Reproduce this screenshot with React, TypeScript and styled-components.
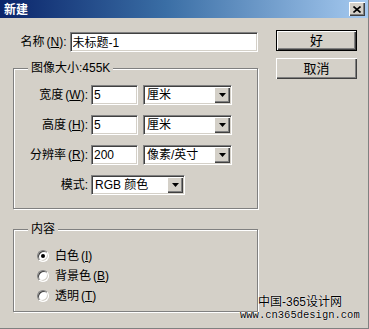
import styled, { createGlobalStyle } from "styled-components";

const GlobalStyle = createGlobalStyle`
  html, body {
    margin: 0;
    padding: 0;
    background: #d4d0c8;
  }
  * {
    box-sizing: border-box;
  }
`;

const Window = styled.div`
  position: relative;
  width: 369px;
  height: 329px;
  background: #d4d0c8;
  border-right: 1px solid #808080;
  border-bottom: 1px solid #808080;
  font-family: "Liberation Sans", "Noto Sans CJK SC", sans-serif;
  font-size: 12px;
  line-height: 14px;
  color: #000;
  overflow: hidden;
`;

const TitleBar = styled.div`
  height: 18px;
  display: flex;
  align-items: center;
  justify-content: space-between;
  padding: 0 3px 0 4px;
  background: linear-gradient(to right, #0a246a 0%, #3a6ea5 45%, #a6caf0 100%);
`;

const TitleText = styled.span`
  color: #fff;
  font-weight: bold;
  font-size: 12px;
  font-family: "Noto Sans CJK SC", sans-serif;
`;

const CloseButton = styled.div`
  width: 16px;
  height: 14px;
  display: flex;
  align-items: center;
  justify-content: center;
  background: #d4d0c8;
  box-shadow: inset 1px 1px 0 #fff, inset -1px -1px 0 #404040,
    inset -2px -2px 0 #808080;
`;

const Body = styled.div`
  display: flex;
  padding: 12px 0 0 13px;
`;

const LeftColumn = styled.div`
  width: 245px;
  display: flex;
  flex-direction: column;
`;

const RightColumn = styled.div`
  margin-left: 18px;
  display: flex;
  flex-direction: column;
  gap: 7px;
`;

const NameRow = styled.div`
  display: flex;
  align-items: center;
  height: 21px;
  margin-top: 1px;
  padding-left: 4px;
`;

const Label = styled.span<{ $width?: number }>`
  display: inline-block;
  width: ${(p) => (p.$width ? `${p.$width}px` : "auto")};
  text-align: right;
  margin-right: 3px;
  white-space: nowrap;
`;

const Key = styled.span`
  margin-left: 2px;
`;

const TextField = styled.input<{ $width: number }>`
  width: ${(p) => p.$width}px;
  height: 20px;
  margin: 0;
  padding: 0 2px;
  font: inherit;
  color: #000;
  background: #fff;
  outline: none;
  border: 1px solid;
  border-color: #808080 #fff #fff #808080;
  box-shadow: inset 1px 1px 0 #404040, inset -1px -1px 0 #d4d0c8;
`;

const GroupBox = styled.div<{ $top: number; $height: number }>`
  position: relative;
  margin-top: ${(p) => p.$top}px;
  width: 245px;
  height: ${(p) => p.$height}px;
  border: 1px solid #808080;
  box-shadow: inset 1px 1px 0 #fff, 1px 1px 0 #fff;
`;

const Legend = styled.span`
  position: absolute;
  left: 14px;
  top: -8px;
  padding: 0 3px;
  background: #d4d0c8;
  line-height: 14px;
`;

const FieldRows = styled.div`
  display: flex;
  flex-direction: column;
  gap: 10px;
  padding-top: 16px;
`;

const FieldRow = styled.div`
  display: flex;
  align-items: center;
  height: 20px;
`;

const Combo = styled.div<{ $width: number; $gap?: number }>`
  display: flex;
  align-items: center;
  width: ${(p) => p.$width}px;
  height: 20px;
  margin-left: ${(p) => p.$gap ?? 0}px;
  padding: 2px;
  background: #fff;
  border: 1px solid;
  border-color: #808080 #fff #fff #808080;
  box-shadow: inset 1px 1px 0 #404040, inset -1px -1px 0 #d4d0c8;
`;

const ComboText = styled.span`
  flex: 1;
  padding-left: 1px;
  white-space: nowrap;
`;

const DropButton = styled.span`
  width: 16px;
  height: 16px;
  margin-right: -1px;
  display: flex;
  align-items: center;
  justify-content: center;
  background: #d4d0c8;
  box-shadow: inset 1px 1px 0 #fff, inset -1px -1px 0 #404040,
    inset -2px -2px 0 #808080;
`;

const Button = styled.button<{ $default?: boolean }>`
  width: 81px;
  height: 21px;
  margin: 0;
  padding: 0;
  font: inherit;
  font-size: 13px;
  color: #000;
  background: #d4d0c8;
  border: ${(p) => (p.$default ? "1px solid #000" : "none")};
  box-shadow: inset 1px 1px 0 #fff, inset -1px -1px 0 #404040,
    inset -2px -2px 0 #808080;
`;

const RadioList = styled.div`
  display: flex;
  flex-direction: column;
  padding: 16px 0 0 23px;
`;

const RadioRow = styled.label`
  display: flex;
  align-items: center;
  height: 20px;
  gap: 6px;
`;

const RadioCircle = styled.span<{ $checked?: boolean }>`
  width: 12px;
  height: 12px;
  border-radius: 50%;
  display: flex;
  align-items: center;
  justify-content: center;
  background: #fff;
  border: 1px solid;
  border-color: #808080 #fff #fff #808080;
  box-shadow: inset 1px 1px 0 #404040, inset -1px -1px 0 #d4d0c8;

  &::after {
    content: "";
    width: 4px;
    height: 4px;
    border-radius: 50%;
    background: ${(p) => (p.$checked ? "#000" : "transparent")};
  }
`;

const Watermark = styled.div`
  position: absolute;
  left: 240px;
  top: 295px;
  display: flex;
  flex-direction: column;
  align-items: flex-start;
  text-shadow: 0 0 1px #fff, 0 0 1px #fff;
`;

const WatermarkTitle = styled.span`
  margin-left: 18px;
  font-size: 12px;
  line-height: 14px;
`;

const WatermarkUrl = styled.span`
  font-family: "Liberation Mono", monospace;
  font-size: 10.5px;
  line-height: 12px;
  white-space: nowrap;
`;

const Arrow = () => (
  <svg width="7" height="4" viewBox="0 0 7 4">
    <path d="M0 0h7L3.5 4z" fill="#000" />
  </svg>
);

const CloseGlyph = () => (
  <svg width="8" height="7" viewBox="0 0 8 7">
    <path d="M0.5 0.5L7.5 6.5M7.5 0.5L0.5 6.5" stroke="#000" strokeWidth="1.6" />
  </svg>
);

const sizeRows = [
  { label: "宽度", key: "W", value: "5", unit: "厘米" },
  { label: "高度", key: "H", value: "5", unit: "厘米" },
  { label: "分辨率", key: "R", value: "200", unit: "像素/英寸" },
];

const contents = [
  { label: "白色", key: "I", checked: true },
  { label: "背景色", key: "B" },
  { label: "透明", key: "T" },
];

const App = () => {
  return (
    <Window>
      <GlobalStyle />
      <TitleBar>
        <TitleText>新建</TitleText>
        <CloseButton>
          <CloseGlyph />
        </CloseButton>
      </TitleBar>
      <Body>
        <LeftColumn>
          <NameRow>
            <Label $width={50}>
              名称<Key>(<u>N</u>)</Key>:
            </Label>
            <TextField $width={190} defaultValue="未标题-1" />
          </NameRow>

          <GroupBox $top={16} $height={141}>
            <Legend>图像大小:455K</Legend>
            <FieldRows>
              {sizeRows.map((row) => (
                <FieldRow key={row.key}>
                  <Label $width={74}>
                    {row.label}
                    <Key>
                      (<u>{row.key}</u>)
                    </Key>
                    :
                  </Label>
                  <TextField $width={47} defaultValue={row.value} />
                  <Combo $width={89} $gap={5}>
                    <ComboText>{row.unit}</ComboText>
                    <DropButton>
                      <Arrow />
                    </DropButton>
                  </Combo>
                </FieldRow>
              ))}
              <FieldRow>
                <Label $width={74}>模式:</Label>
                <Combo $width={94}>
                  <ComboText>RGB 颜色</ComboText>
                  <DropButton>
                    <Arrow />
                  </DropButton>
                </Combo>
              </FieldRow>
            </FieldRows>
          </GroupBox>

          <GroupBox $top={20} $height={83}>
            <Legend>内容</Legend>
            <RadioList>
              {contents.map((item) => (
                <RadioRow key={item.key}>
                  <RadioCircle $checked={item.checked} />
                  <span>
                    {item.label}
                    <Key>
                      (<u>{item.key}</u>)
                    </Key>
                  </span>
                </RadioRow>
              ))}
            </RadioList>
          </GroupBox>
        </LeftColumn>

        <RightColumn>
          <Button $default>好</Button>
          <Button>取消</Button>
        </RightColumn>
      </Body>

      <Watermark>
        <WatermarkTitle>中国-365设计网</WatermarkTitle>
        <WatermarkUrl>www.cn365design.com</WatermarkUrl>
      </Watermark>
    </Window>
  );
};

export default App;
